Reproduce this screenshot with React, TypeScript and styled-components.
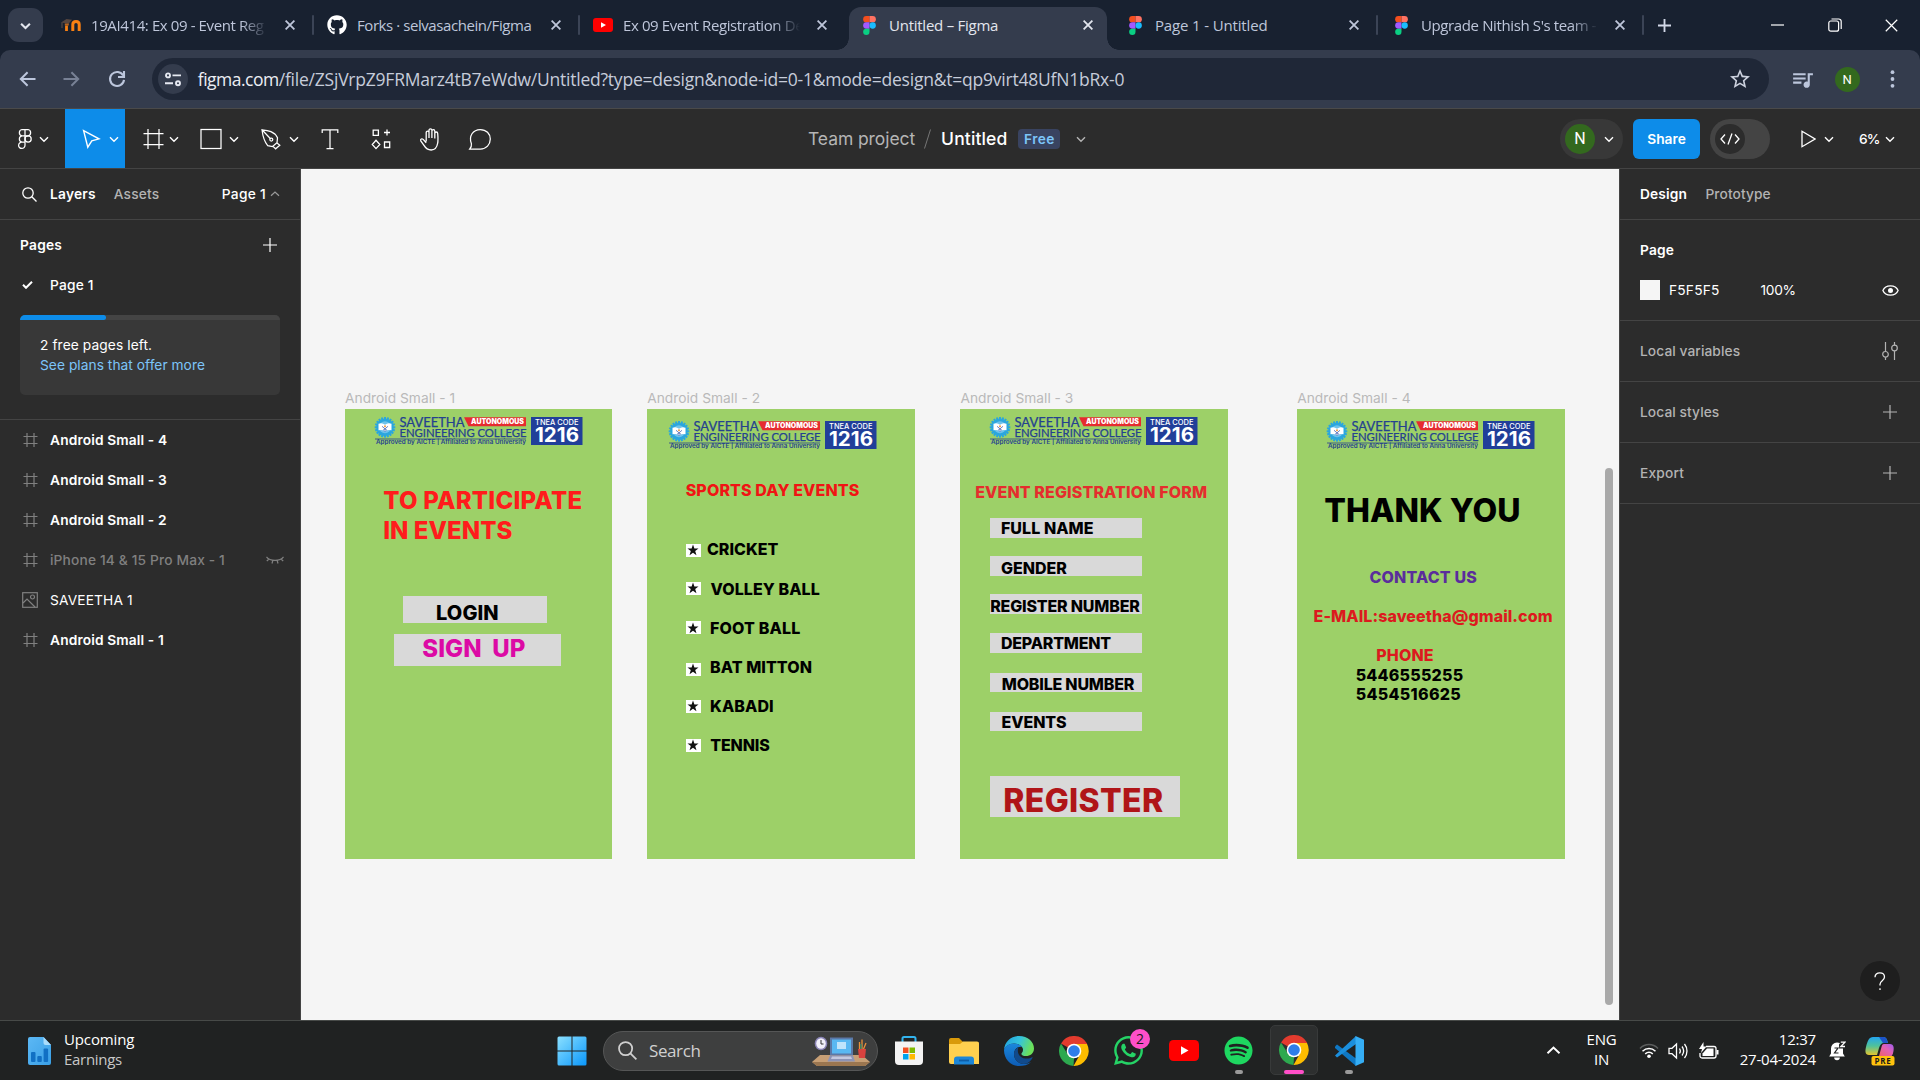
import React from "react";
import styled, { createGlobalStyle, css } from "styled-components";
import { FaGithub, FaSpotify, FaWhatsapp } from "react-icons/fa";
import { MdStarBorder, MdQueueMusic } from "react-icons/md";

const GlobalStyle = createGlobalStyle`
  * { box-sizing: border-box; }
  body { margin: 0; background: #2c2c2c; overflow: hidden; }
  svg { display: block; flex: none; }
`;

const ui = `"Open Sans", "Noto Sans", sans-serif`;
const inter = `Inter, "Liberation Sans", sans-serif`;

const Screen = styled.div`
  width: 1920px;
  height: 1080px;
  display: flex;
  flex-direction: column;
  overflow: hidden;
  font-family: ${inter};
  white-space: nowrap;
`;

/* ---------- browser chrome ---------- */

const TabStrip = styled.div`
  height: 50px;
  display: flex;
  background: #182130;
  padding-left: 8px;
  font-family: ${ui};
`;
const TabSearch = styled.div`
  width: 35px;
  height: 34px;
  margin: 8px 8px 0 0;
  border-radius: 11px;
  background: #343c4d;
  color: #e3e6ee;
  display: grid;
  place-items: center;
`;
const Tab = styled.div<{ $active?: boolean }>`
  position: relative;
  width: 258px;
  height: 43px;
  margin-top: 7px;
  padding: 0 9px 7px 10px;
  display: flex;
  align-items: center;
  border-radius: 12px 12px 0 0;
  background: ${(p) => (p.$active ? "#343c4d" : "transparent")};
  color: ${(p) => (p.$active ? "#e3e6ee" : "#bec6da")};
  ${(p) =>
    p.$active &&
    css`
      &::before,
      &::after {
        content: "";
        position: absolute;
        bottom: 0;
        width: 12px;
        height: 12px;
      }
      &::before {
        left: -12px;
        background: radial-gradient(circle at 0 0, transparent 11.5px, #343c4d 12px);
      }
      &::after {
        right: -12px;
        background: radial-gradient(circle at 100% 0, transparent 11.5px, #343c4d 12px);
      }
    `}
`;
const TabIcon = styled.div`
  width: 20px;
  height: 20px;
  margin-right: 10px;
  display: grid;
  place-items: center;
  color: #fff;
`;
const TabTitle = styled.div<{ $ls: number; $fade?: boolean }>`
  width: 178px;
  overflow: hidden;
  font-size: 15px;
  line-height: 22px;
  letter-spacing: ${(p) => p.$ls}px;
  ${(p) => p.$fade && "mask-image: linear-gradient(90deg, #000 150px, transparent 177px);"}
`;
const TabClose = styled.div`
  width: 21px;
  margin-left: auto;
  display: grid;
  place-items: center;
`;
const TabGap = styled.div<{ $line?: boolean }>`
  width: 8px;
  height: 20px;
  margin-top: 15px;
  display: flex;
  justify-content: center;
  &::before {
    content: "";
    width: 2px;
    border-radius: 1px;
    background: ${(p) => (p.$line ? "#3b4456" : "transparent")};
  }
`;
const NewTab = styled.div`
  width: 34px;
  height: 50px;
  display: grid;
  place-items: center;
  color: #d3d9e8;
`;
const WindowButtons = styled.div`
  margin-left: auto;
  display: flex;
  color: #fff;
  & > div {
    width: 57px;
    height: 50px;
    display: grid;
    place-items: center;
  }
`;
const NavBack = styled.div`
  background: #182130;
`;
const NavBar = styled.div`
  height: 58px;
  background: #343c4d;
  border-radius: 10px 10px 0 0;
  display: flex;
  align-items: center;
  padding: 0 6px;
  color: #bcc6dc;
`;
const NavSlot = styled.div<{ $w?: number; $dim?: boolean }>`
  width: ${(p) => p.$w ?? 44}px;
  display: grid;
  place-items: center;
  opacity: ${(p) => (p.$dim ? 0.5 : 1)};
`;
const Omnibox = styled.div`
  width: 1620px;
  height: 42px;
  margin: 0 11px 0 12px;
  border-radius: 21px;
  background: #1f2737;
  display: flex;
  align-items: center;
  padding: 0 17px 0 6px;
  font: 17.5px/28px ${ui};
  letter-spacing: -0.22px;
  color: #c6ccda;
`;
const Host = styled.span`
  color: #eceef4;
  letter-spacing: -0.5px;
`;
const SiteChip = styled.div`
  width: 30px;
  height: 30px;
  margin-right: 10px;
  border-radius: 50%;
  background: #343c4d;
  display: grid;
  place-items: center;
`;
const StarSlot = styled.div`
  margin-left: auto;
  color: #cdd2df;
`;
const Avatar = styled.div<{ $size: number }>`
  width: ${(p) => p.$size}px;
  height: ${(p) => p.$size}px;
  border-radius: 50%;
  background: #33691e;
  color: #fff;
  display: grid;
  place-items: center;
  font: ${(p) => (p.$size > 26 ? 16 : 13)}px/1 Roboto, sans-serif;
`;

/* ---------- figma toolbar ---------- */

const Toolbar = styled.div`
  height: 61px;
  display: flex;
  background: #2c2c2c;
  border-top: 1px solid #4a4a4a;
  border-bottom: 1px solid #444;
  color: #fff;
`;
const Tool = styled.div<{ $w?: number; $pad?: number; $gap?: number; $on?: boolean }>`
  width: ${(p) => p.$w ?? 60}px;
  height: 59px;
  padding-left: ${(p) => p.$pad ?? 16}px;
  display: flex;
  align-items: center;
  gap: ${(p) => p.$gap ?? 4}px;
  background: ${(p) => (p.$on ? "#0d8ce9" : "transparent")};
`;
const FileTitle = styled.div`
  display: flex;
  align-items: center;
  margin-left: 303px;
  font-size: 17.5px;
  color: #b5b5b5;
  letter-spacing: -0.08px;
`;
const Slash = styled.div`
  margin-left: 9px;
`;
const FileName = styled.span`
  margin-left: 10px;
  color: #fff;
  font-weight: 500;
  letter-spacing: 0.12px;
`;
const FreeBadge = styled.span`
  width: 42px;
  height: 20px;
  margin: 0 16px 0 11px;
  border-radius: 4px;
  background: #394360;
  color: #7cc4f8;
  font-size: 13.75px;
  font-weight: 600;
  line-height: 20px;
  letter-spacing: 0.4px;
  text-align: center;
`;
const Actions = styled.div`
  margin-left: auto;
  padding-right: 25px;
  display: flex;
  align-items: center;
`;
const UserPill = styled.div`
  width: 63px;
  height: 40px;
  padding-left: 5px;
  border-radius: 20px;
  background: #383838;
  display: flex;
  align-items: center;
  gap: 9px;
`;
const Share = styled.div`
  width: 67px;
  height: 40px;
  margin: 0 10px;
  border-radius: 6px;
  background: #0d8ce9;
  font-size: 13.75px;
  font-weight: 600;
  line-height: 40px;
  text-align: center;
`;
const DevToggle = styled.div`
  width: 60px;
  height: 40px;
  padding: 5px;
  margin-right: 31px;
  border-radius: 20px;
  background: #444;
`;
const DevKnob = styled.div`
  width: 30px;
  height: 30px;
  border-radius: 50%;
  background: #2c2c2c;
  display: grid;
  place-items: center;
`;
const PlayGroup = styled.div`
  display: flex;
  align-items: center;
  gap: 8px;
`;
const Zoom = styled.div`
  width: 19px;
  margin: 0 7px 0 25px;
  font-size: 13.75px;
  font-weight: 500;
  letter-spacing: -0.9px;
`;

/* ---------- workspace ---------- */

const Workspace = styled.div`
  height: 851px;
  display: flex;
`;
const LeftPanel = styled.div`
  width: 301px;
  border-right: 1px solid #444;
  background: #2c2c2c;
  color: #fff;
  font-size: 13.75px;
`;
const RightPanel = styled.div`
  position: relative;
  width: 301px;
  border-left: 1px solid #444;
  background: #2c2c2c;
  color: #fff;
  font-size: 13.75px;
`;
const PanelTabs = styled.div<{ $pad: number }>`
  height: 51px;
  padding: 0 20px 0 ${(p) => p.$pad}px;
  display: flex;
  align-items: center;
  border-bottom: 1px solid #444;
`;
const Label = styled.span<{ $w?: number; $ls?: number; $c?: string; $ml?: number }>`
  font-weight: ${(p) => p.$w ?? 600};
  letter-spacing: ${(p) => p.$ls ?? 0.15}px;
  color: ${(p) => p.$c ?? "#fff"};
  margin-left: ${(p) => p.$ml ?? 0}px;
`;
const Push = styled.div`
  margin-left: auto;
  display: flex;
  align-items: center;
`;
const PagesHead = styled.div`
  height: 50px;
  padding: 0 23px 0 20px;
  display: flex;
  align-items: center;
`;
const PageRow = styled.div`
  height: 30px;
  padding-left: 22px;
  display: flex;
  align-items: center;
`;
const PlanWrap = styled.div`
  padding: 15px 20px 24px;
  border-bottom: 1px solid #444;
`;
const PlanCard = styled.div`
  height: 80px;
  border-radius: 5px;
  overflow: hidden;
  background: #383838;
  line-height: 20px;
`;
const PlanMeter = styled.div`
  height: 5px;
  margin-bottom: 15px;
  background: #444;
  &::before {
    content: "";
    display: block;
    width: 86px;
    height: 5px;
    border-radius: 0 3px 3px 0;
    background: #0d8ce9;
  }
`;
const PlanText = styled.div<{ $link?: boolean }>`
  padding-left: 20px;
  letter-spacing: ${(p) => (p.$link ? 0.04 : 0.09)}px;
  color: ${(p) => (p.$link ? "#7cc4f8" : "#fff")};
`;
const LayerRow = styled.div<{ $dim?: boolean; $thin?: boolean }>`
  height: 40px;
  padding: 0 16px 0 22px;
  display: flex;
  align-items: center;
  font-weight: ${(p) => (p.$thin ? 400 : p.$dim ? 500 : 600)};
  letter-spacing: ${(p) => (p.$dim ? 0.15 : 0.13)}px;
  color: ${(p) => (p.$dim ? "#808080" : "#fff")};
  & > svg:first-child {
    margin-right: 12px;
  }
`;
const PageSection = styled.div`
  height: 101px;
  padding: 20px 20px 0;
  border-bottom: 1px solid #444;
`;
const PageTitle = styled.div`
  height: 20px;
  line-height: 21px;
  font-weight: 600;
  letter-spacing: 0.2px;
`;
const FillRow = styled.div`
  height: 40px;
  padding-right: 1px;
  margin-top: 10px;
  display: flex;
  align-items: center;
`;
const Swatch = styled.div`
  width: 20px;
  height: 20px;
  background: #f5f5f5;
`;
const Section = styled.div<{ $end?: number }>`
  height: 61px;
  padding: 0 ${(p) => p.$end ?? 23}px 0 20px;
  display: flex;
  align-items: center;
  border-bottom: 1px solid #444;
`;
const Help = styled.div`
  position: absolute;
  right: 20px;
  bottom: 19px;
  width: 40px;
  height: 40px;
  border-radius: 50%;
  background: #1e1e1e;
  display: grid;
  place-items: center;
`;

/* ---------- canvas ---------- */

const Canvas = styled.div`
  position: relative;
  width: 1318px;
  background: #f5f5f5;
`;
const Scrollbar = styled.div`
  position: absolute;
  left: 1304px;
  top: 299px;
  width: 8px;
  height: 537px;
  border-radius: 4px;
  background: #a9a9a9;
`;
const Artboard = styled.div<{ $x: number }>`
  position: absolute;
  left: ${(p) => p.$x}px;
  top: 239.5px;
  width: 267.4px;
  height: 450px;
  background: #9dd068;
  color: #000;
`;
const ArtboardName = styled.div`
  position: absolute;
  left: 0;
  top: -21px;
  font-size: 13.75px;
  line-height: 20px;
  letter-spacing: 0.02px;
  color: #b9b9b9;
`;
const Box = styled.div<{ $x: number; $y: number; $w: number; $h: number }>`
  position: absolute;
  left: ${(p) => p.$x}px;
  top: ${(p) => p.$y}px;
  width: ${(p) => p.$w}px;
  height: ${(p) => p.$h}px;
  background: #d9d9d9;
`;
/* $y is the text baseline */
const CanvasText = styled.div<{ $x: number; $y: number; $s?: number; $ls?: number; $c?: string }>`
  position: absolute;
  left: ${(p) => p.$x}px;
  top: ${(p) => p.$y + 0.5 - (p.$s ?? 16) * 0.964}px;
  font-size: ${(p) => p.$s ?? 16}px;
  line-height: 1.2;
  font-weight: 760;
  font-variation-settings: "opsz" 14;
  letter-spacing: ${(p) => p.$ls ?? 0.15}px;
  color: ${(p) => p.$c ?? "#000"};
  white-space: pre;
`;
const StarBox = styled.div<{ $y: number }>`
  position: absolute;
  left: 38.5px;
  top: ${(p) => p.$y}px;
  width: 15px;
  height: 12.5px;
  background: #fff;
  display: grid;
  place-items: center;
`;
const LogoSpot = styled.div<{ $x: number; $y: number }>`
  position: absolute;
  left: ${(p) => p.$x}px;
  top: ${(p) => p.$y}px;
  & > svg {
    overflow: visible;
  }
`;

/* ---------- taskbar ---------- */

const Taskbar = styled.div`
  height: 60px;
  border-top: 1px solid #474a48;
  background: #202222;
  display: flex;
  align-items: center;
  font: 15px/20px ${ui};
  color: #fff;
`;
const Widget = styled.div`
  width: 557px;
  padding-left: 28px;
  display: flex;
  align-items: center;
  gap: 13px;
`;
const WidgetText = styled.div`
  padding-bottom: 3px;
  letter-spacing: -0.12px;
  & > div:last-child {
    color: #c8c8c8;
    letter-spacing: -0.3px;
  }
`;
const SearchBox = styled.div`
  width: 275px;
  height: 40px;
  margin: 0 3px 0 16px;
  padding: 0 7px 0 14px;
  border: 1px solid #555656;
  border-radius: 20px;
  background: #3e3f3f;
  display: flex;
  align-items: center;
  font-size: 17px;
  letter-spacing: -0.4px;
  color: #d0d0d0;
`;
const SearchWord = styled.span`
  margin: 0 auto 0 12px;
`;
const App55 = styled.div<{ $mark?: "idle" | "active" }>`
  position: relative;
  width: 55px;
  height: 59px;
  display: grid;
  place-items: center;
  ${(p) =>
    p.$mark &&
    css`
      &::after {
        content: "";
        position: absolute;
        left: ${p.$mark === "active" ? 17.5 : 23.5}px;
        top: 49px;
        width: ${p.$mark === "active" ? 20 : 8}px;
        height: 4px;
        border-radius: 2px;
        background: ${p.$mark === "active" ? "#ff4fc8" : "#9a9a9a"};
      }
    `}
`;
const ActiveTile = styled.div`
  width: 48px;
  height: 50px;
  margin-bottom: 1px;
  border: 1px solid #383a3a;
  border-radius: 5px;
  background: #2d2f2f;
  display: grid;
  place-items: center;
`;
const CountBadge = styled.div`
  position: absolute;
  left: 29px;
  top: 8px;
  width: 20px;
  height: 20px;
  border-radius: 50%;
  background: #ff4fc8;
  color: #1a1a1a;
  font-size: 14px;
  line-height: 20px;
  text-align: center;
`;
const Tray = styled.div`
  margin-left: auto;
  padding-right: 17px;
  display: flex;
  align-items: center;
`;
const TrayText = styled.div<{ $w: number; $align: string; $ls: number }>`
  width: ${(p) => p.$w}px;
  padding-bottom: 3px;
  text-align: ${(p) => p.$align};
  letter-spacing: ${(p) => p.$ls}px;
`;
const TrayIcon = styled.div<{ $w: number }>`
  width: ${(p) => p.$w}px;
  display: grid;
  place-items: center;
`;

/* ---------- drawings ---------- */

const Chevron = ({ w = 10, sw = 1.4, up = false, c = "currentColor" }) => (
  <svg width={w} height={w} viewBox="0 0 10 10" fill="none" stroke={c} strokeWidth={sw}>
    <path d={up ? "M1 6.8 5 3l4 3.8" : "M1 3.3 5 7.2 9 3.3"} />
  </svg>
);
const Cross = ({ s = 10, sw = 1.8 }) => (
  <svg width={s} height={s} viewBox="0 0 10 10" stroke="currentColor" strokeWidth={(sw * 10) / s}>
    <path d="M.6.6l8.8 8.8M9.4.6.6 9.4" />
  </svg>
);
const Plus = ({ s = 14, sw = 1.2, c = "currentColor" }) => (
  <svg width={s} height={s} viewBox="0 0 14 14" stroke={c} strokeWidth={sw}>
    <path d="M7 0v14M0 7h14" />
  </svg>
);
const FigmaLogo = () => (
  <svg width="13" height="19" viewBox="0 0 12 18">
    <path d="M3 0h3v6H3a3 3 0 0 1 0-6z" fill="#f24e1e" />
    <path d="M6 0h3a3 3 0 0 1 0 6H6z" fill="#ff7262" />
    <path d="M3 6h3v6H3a3 3 0 0 1 0-6z" fill="#a259ff" />
    <circle cx="9" cy="9" r="3" fill="#1abcfe" />
    <path d="M3 12h3v3a3 3 0 1 1-3-3z" fill="#0acf83" />
  </svg>
);
const Moodle = () => (
  <svg width="20" height="14" viewBox="0 0 20 14" fill="none">
    <path d="M5.500 13V7.500" stroke="#f98012" strokeWidth="2.800" />
    <path d="M11.800 13V6.500c0-4 6.400-4 6.400 0V13" stroke="#f98012" strokeWidth="3" />
    <path d="M0 4.500 5.500 1l5.500.8-3.500 4z" fill="#57463f" />
    <path d="M3.800 5.500h4v2h-4z" fill="#b8651f" />
    <path d="M1 4.500V10" stroke="#5f5049" strokeWidth="1" />
  </svg>
);
const YouTube = ({ w = 20, h = 14 }) => (
  <svg width={w} height={h} viewBox="0 0 20 14" preserveAspectRatio="none">
    <rect width="20" height="14" rx="3" fill="#f00" />
    <path d="M8 4.2v5.6L13 7z" fill="#fff" />
  </svg>
);
const Reload = () => (
  <svg width="18" height="18" viewBox="0 0 18 18" fill="none" stroke="currentColor" strokeWidth="2.1">
    <path d="M15.2 5.6A7 7 0 1 0 16 9.8" />
    <path d="M16 1v6h-6" />
  </svg>
);
const Arrow = ({ flip = false }) => (
  <svg width="17" height="16" viewBox="0 0 17 16" fill="none" stroke="currentColor" strokeWidth="2" transform={flip ? "scale(-1 1)" : undefined}>
    <path d="M16.5 8H2M8.600 1.200 1.800 8l6.800 6.800" />
  </svg>
);
const SiteSettings = () => (
  <svg width="16" height="15" viewBox="0 0 16 15" fill="none" stroke="#e6e9f2" strokeWidth="1.900">
    <circle cx="3" cy="3.400" r="2" />
    <path d="M7.500 3.400H16M0 11.300h8" />
    <circle cx="13" cy="11.300" r="2" />
  </svg>
);
const toolSvg = { width: 24, height: 24, viewBox: "0 0 24 24", fill: "none", stroke: "#fff", strokeWidth: 1.25 };
const FigmaMenu = () => (
  <svg {...toolSvg}>
    <path d="M12 2.5H9a3.2 3.2 0 0 0 0 6.3h3zM12 2.5h3a3.2 3.2 0 0 1 0 6.3h-3zM12 8.8H9a3.2 3.2 0 0 0 0 6.3h3zM12 15.1H9a3.2 3.2 0 1 0 3 3.2z" />
    <circle cx="15.1" cy="12" r="3.1" />
  </svg>
);
const MoveIcon = () => (
  <svg {...toolSvg} strokeWidth={1.4}><path d="M4.600 3.600 20 11.800l-7.200 2-4 6.400z" /></svg>
);
const FrameIcon = () => (
  <svg {...toolSvg}><path d="M7 2v20M18 2v20M2.500 6.500h20M2.500 17.500h20" /></svg>
);
const RectIcon = () => (
  <svg {...toolSvg}><rect x="2" y="2.500" width="20" height="19" /></svg>
);
const PenIcon = () => (
  <svg {...toolSvg}>
    <path d="M3 2.8c6 .6 12.600 1.600 15.500 8l-.5 5-4.500 3.700-4.800-.9C5.200 14.500 3.600 8 3 2.800zM3 2.800l8.500 9" />
    <circle cx="12.300" cy="12.600" r="1.500" />
    <path d="m18 16 2.800 2.200-4.200 3.600-2.600-2.400" />
  </svg>
);
const TypeIcon = () => (
  <svg {...toolSvg}><path d="M4.200 6V2.800h15.600V6M12 2.800v18.700M8.500 21.500h7" /></svg>
);
const ComponentsIcon = () => (
  <svg {...toolSvg} strokeWidth={1.3}>
    <path d="M4.200 3.200h5.200v5.200H4.200zM15.500 15h5.200v5.500h-5.200zM18 2.500v6M15 5.500h6M7 13.300l3.800 4.200L7 21.600l-3.700-4.100z" />
  </svg>
);
const HandIcon = () => (
  <svg {...toolSvg} strokeWidth={1.3}>
    <path d="M7.200 14.500V5.600c0-2 2.800-2 2.800 0M10 11V3.300c0-2 2.900-2 2.900 0V11M12.900 4.200c0-2 2.900-2 2.900 0V11.500M15.800 6.500c0-2 2.900-2 2.900 0 .4 5 .4 7.500 0 9.500-.6 3.600-2.500 7-6.500 7-3.700 0-5.700-2-7.200-4.600L1.800 14c-.8-2 1.200-2.800 2.400-1.600l3 3.300" />
  </svg>
);
const CommentIcon = () => (
  <svg {...toolSvg}><path d="M1.800 22c1.700-2 1.900-3.300 1.600-5.200C.4 9 5 2.500 12.300 2.500c6 0 10 4.300 10 9.600 0 5.400-4 9.900-10 9.900z" /></svg>
);
const CodeIcon = () => (
  <svg width="20" height="12" viewBox="0 0 20 12" fill="none" stroke="#fff" strokeWidth="1.300">
    <path d="M5 1.500 1 6l4 4.500M15 1.500 19 6l-4 4.500M12 .5 8 11.500" />
  </svg>
);
const PlayIcon = () => (
  <svg width="15" height="18" viewBox="0 0 15 18" fill="none" stroke="#fff" strokeWidth="1.300">
    <path d="M1 1.300 14 9 1 16.700z" />
  </svg>
);
const SearchGlyph = ({ s = 15, sw = 1.3 }) => (
  <svg width={s} height={s} viewBox="0 0 15 15" fill="none" stroke="currentColor" strokeWidth={sw}>
    <circle cx="6" cy="6" r="5.200" />
    <path d="m9.800 9.800 4.700 4.700" />
  </svg>
);
const Hash = () => (
  <svg width="16" height="16" viewBox="0 0 16 16" stroke="#808080" strokeWidth="1.200">
    <path d="M5 1v14M12 1v14M1.500 4.500h14M1.500 11.500h14" />
  </svg>
);
const ImageGlyph = () => (
  <svg width="16" height="16" viewBox="0 0 16 16" fill="none" stroke="#808080" strokeWidth="1.200">
    <rect x=".7" y=".7" width="14.600" height="14.600" />
    <circle cx="10.500" cy="5" r="2" />
    <path d="m1 11 4-4 8 8" />
  </svg>
);
const ClosedEye = () => (
  <svg width="18" height="8" viewBox="0 0 18 8" fill="none" stroke="#808080" strokeWidth="1.200">
    <path d="M.5.8C4 5.500 14 5.500 17.500.8M3 3 .8 5M6.800 4.500 6 7.500M11.200 4.500l.8 3M15 3l2.200 2" />
  </svg>
);
const Check = () => (
  <svg width="11" height="8" viewBox="0 0 11 8" fill="none" stroke="#fff" strokeWidth="2">
    <path d="m1 3.800 3 3L10 .8" />
  </svg>
);
const Eye = () => (
  <svg width="17" height="11" viewBox="0 0 17 11" fill="none" stroke="#fff" strokeWidth="1.300">
    <path d="M.9 5.500C3.500-.7 13.500-.7 16.100 5.500 13.500 11.700 3.500 11.700.9 5.500z" />
    <circle cx="8.500" cy="5.500" r="2.500" fill="#fff" stroke="none" />
  </svg>
);
const Sliders = () => (
  <svg width="16" height="18" viewBox="0 0 16 18" fill="none" stroke="#b3b3b3" strokeWidth="1.200">
    <path d="M3.500 0v9.500M3.500 15.200V18M12.500 0v3.200M12.500 9v9" />
    <circle cx="3.500" cy="12.300" r="2.800" />
    <circle cx="12.500" cy="6" r="2.800" />
  </svg>
);
const QuestionMark = () => (
  <svg width="12" height="19" viewBox="0 0 12 19" fill="none" stroke="#fff" strokeWidth="1.300">
    <path d="M1 5.200C1 2.500 3 .9 5.800.9s4.700 1.600 4.700 4.100c0 3.600-4.500 3.800-4.500 7.300v1.200M6 16.300v1.600" />
  </svg>
);
const Star = () => (
  <svg width="12" height="12" viewBox="0 0 24 24" fill="#111">
    <path d="m12 1 2.800 8H23l-6.600 5 2.500 8.300L12 17.300 5.100 22.300 7.600 14 1 9h8.200z" />
  </svg>
);

const teeth = Array.from({ length: 20 }, (_, i) => i * 18);
const CollegeLogo = () => (
  <svg width="208" height="29" viewBox="0 0 208 29">
    <g transform="translate(10 10.300)">
      {teeth.map((a) => (
        <rect key={a} x="-1" y="-10.300" width="2" height="3" fill="#2ba6de" transform={`rotate(${a})`} />
      ))}
      <circle r="8.800" fill="#2ba6de" />
      <circle r="6" fill="#6fc2ea" />
      <path d="M-6.500-3.500Q-3-5 0-2.500 3-5 6.500-3.500V3Q3 2 0 4-3 2-6.500 3z" fill="#fff" />
      <path d="M-3-1 0 1.500 3-1M0 1.500V4.500M-2 3 0 1.500 2 3" stroke="#4a63b5" strokeWidth=".8" fill="none" />
      <circle cy="-1" r="1" fill="#f29a3b" />
    </g>
    <g fill="#24418f" stroke="#24418f" strokeWidth=".25" fontFamily="Lato, sans-serif">
      <text x="24.500" y="9.900" fontSize="13" textLength="65" lengthAdjust="spacingAndGlyphs">SAVEETHA</text>
      <text x="24.500" y="20" fontSize="11.200" textLength="127" lengthAdjust="spacingAndGlyphs">ENGINEERING COLLEGE</text>
    </g>
    <text x="1" y="27.400" fontSize="5.600" fill="#24418f" fontFamily="Inter, sans-serif" fontWeight="600" textLength="150" lengthAdjust="spacingAndGlyphs">Approved by AICTE | Affiliated to Anna University</text>
    <path d="M0 22h151" stroke="#24418f" strokeWidth=".8" />
    <path d="M89 .3h62v9H93.500z" fill="#e62b2f" />
    <text x="96" y="7.300" fontSize="7" fontWeight="900" fill="#fff" fontFamily="Inter, sans-serif" textLength="53" lengthAdjust="spacingAndGlyphs">AUTONOMOUS</text>
    <rect x="156" y="0" width="51.500" height="28" fill="#213f99" />
    <g fill="#fff" fontFamily="Inter, sans-serif">
      <text x="160" y="8" fontSize="7.500" fontWeight="500" textLength="43.500" lengthAdjust="spacingAndGlyphs">TNEA CODE</text>
      <text x="160" y="25" fontSize="19.500" fontWeight="700" textLength="44" lengthAdjust="spacingAndGlyphs">1216</text>
    </g>
  </svg>
);

const EarningsIcon = () => (
  <svg width="23" height="28" viewBox="0 0 23 28">
    <defs>
      <linearGradient id="doc" x1="0" y1="0" x2="1" y2="1"><stop stopColor="#5cb8f5" /><stop offset="1" stopColor="#3aa0e6" /></linearGradient>
    </defs>
    <path d="M2 0h13.500L23 8v18a2 2 0 0 1-2 2H2a2 2 0 0 1-2-2V2a2 2 0 0 1 2-2z" fill="url(#doc)" />
    <path d="M15.500 0 23 8h-5.500a2 2 0 0 1-2-2z" fill="#a9dcfb" />
    <rect x="3" y="15" width="4.500" height="10" rx="1" fill="#1170c4" />
    <rect x="9.300" y="19" width="4.500" height="6" rx="1" fill="#1170c4" />
    <rect x="15.600" y="11.500" width="4.500" height="13.500" rx="1" fill="#1170c4" />
  </svg>
);
const StartIcon = () => (
  <svg width="30" height="30" viewBox="0 0 30 30">
    <defs>
      <linearGradient id="win" x1="0" y1="0" x2="1" y2="1" gradientUnits="objectBoundingBox"><stop stopColor="#8be0ff" /><stop offset="1" stopColor="#0a97fb" /></linearGradient>
    </defs>
    <path d="M2 .5h12.500V14.500H.5V2A1.500 1.500 0 0 1 2 .5zM15.500.5H28A1.500 1.500 0 0 1 29.500 2v12.500h-14zM.5 15.500h14v14H2A1.500 1.500 0 0 1 .5 28zM15.500 15.500h14V28a1.500 1.500 0 0 1-1.500 1.500H15.500z" fill="url(#win)" />
  </svg>
);
const DeskArt = () => (
  <svg width="58" height="30" viewBox="0 0 58 30">
    <path d="M8 19h42l8 7-5 4H5l-5-4z" fill="#c79f75" />
    <path d="M0 26h58l-5 4H5z" fill="#9b7650" />
    <path d="M18 1.500h23v18H18z" fill="#5b79a8" />
    <path d="M20 3.500h19v14H20z" fill="#59b8f2" />
    <path d="M25 6h9v7h-9z" fill="#bfe4fb" />
    <path d="M18 19.500h23l2 6H15.500z" fill="#8d93b5" />
    <path d="M20 20.500h19l1 2.500H19z" fill="#c4c8de" />
    <ellipse cx="9" cy="7.500" rx="6.300" ry="6.800" fill="#8a84b5" />
    <ellipse cx="9" cy="7.500" rx="4.800" ry="5.200" fill="#f2f0fa" />
    <path d="M9 4v4h2.500" stroke="#333" fill="none" />
    <path d="M46 13h8l-1 9h-6z" fill="#d9423e" />
    <path d="M47.500 13V6M50 13V3.500M51.500 13l2.500-6" stroke="#e8913a" strokeWidth="1.300" />
    <path d="M49 13V8" stroke="#3b8f6b" strokeWidth="1.300" />
  </svg>
);
const StoreIcon = () => (
  <svg width="30" height="30" viewBox="0 0 30 30">
    <path d="M8.500 7V2.500A1.500 1.500 0 0 1 10 1h10a1.500 1.500 0 0 1 1.500 1.500V7" fill="none" stroke="#32b4ef" strokeWidth="2" />
    <path d="M1 5.500h28V25a4 4 0 0 1-4 4H5a4 4 0 0 1-4-4z" fill="#f3f3f3" />
    <path d="M9 11.500h5.500V17H9z" fill="#f25022" /><path d="M15.500 11.500H21V17h-5.500z" fill="#7fba00" />
    <path d="M9 18h5.500v5.500H9z" fill="#00a4ef" /><path d="M15.500 18H21v5.500h-5.500z" fill="#ffb900" />
  </svg>
);
const FolderIcon = () => (
  <svg width="30" height="28" viewBox="0 0 30 28">
    <path d="M0 3a2 2 0 0 1 2-2h8l4 4h14a2 2 0 0 1 2 2v6H0z" fill="#d99a0a" />
    <path d="M0 7h11l3-2.500h14a2 2 0 0 1 2 2V27H2a2 2 0 0 1-2-2z" fill="#ffd04f" />
    <path d="M5 27.500v-5a3 3 0 0 1 3-3h14a3 3 0 0 1 3 3v5z" fill="#1c86d8" />
    <path d="M10 23.500h10" stroke="#0e5ea8" strokeWidth="1.800" />
  </svg>
);
const EdgeIcon = () => (
  <svg width="30" height="30" viewBox="0 0 30 30">
    <defs>
      <linearGradient id="e1" x1="0" y1="0" x2="1" y2=".3"><stop stopColor="#1f9fe0" /><stop offset=".55" stopColor="#35c4dc" /><stop offset="1" stopColor="#6be05a" /></linearGradient>
      <linearGradient id="e2" x1="0" y1="0" x2="0" y2="1"><stop stopColor="#1b87dc" /><stop offset="1" stopColor="#0d5cb5" /></linearGradient>
    </defs>
    <path d="M0 14C.5 6 7 0 15 0c9 0 15 6 15 12.500 0 5-4 7.500-8 7.500-3 0-5-1-4.500-2.500 1-1.500 1.500-2 1.500-4C19 10.500 15 7.500 10 7.500S1 10.500 0 14z" fill="url(#e1)" />
    <path d="M0 14c1-4 5-6.500 10-6.500 4 0 7 1.500 8.300 3.500C14 10 10 13 10 18c0 6 5 10 10 10 3 0 5-.7 7-2-3 3-7.500 4-12 4C6.500 30 0 23 0 14z" fill="url(#e2)" />
    <path d="M10 18c0-3.500 2-6 4.500-6.500-1.500 2.500-1 10 7 11 3 .3 5-.5 6.500-1.300.5-.2.800.2.500.600C27 25 24 28 20 28c-5 0-10-4-10-10z" fill="#114a8b" />
  </svg>
);
const ChromeIcon = () => (
  <svg width="30" height="30" viewBox="0 0 30 30">
    <path d="M15 15 2 7.500A15 15 0 0 1 28 7.500L28 8H15z" fill="#e33b2e" />
    <path d="M2 7.500 8.900 18.500 15 22l-.5 8A15 15 0 0 1 2 7.500z" fill="#2da94f" />
    <path d="M15 8h13a15 15 0 0 1-13.500 22l6.500-11.500z" fill="#fdbd00" />
    <circle cx="15" cy="15" r="7.300" fill="#fff" />
    <circle cx="15" cy="15" r="5.800" fill="#2f7de9" />
  </svg>
);
const CodeEditorIcon = () => (
  <svg width="30" height="30" viewBox="0 0 30 30">
    <path d="M1 10.500 3 8.500 22 22.500V30L1 12z" fill="#0f78c4" />
    <path d="M1 19.500 3 21.500 22 8V0z" fill="#1b8fdd" />
    <path d="M21.500 0 30 3.800v22.400L21.500 30z" fill="#35aef5" />
  </svg>
);
const Wifi = () => (
  <svg width="20" height="16" viewBox="0 0 20 16" fill="none" stroke="#fff" strokeWidth="1.500">
    <path d="M1 5.500C6 .3 14 .3 19 5.500" stroke="#5b5d5d" />
    <path d="M3.500 8.300c3.800-3.600 9.200-3.600 13 0M6.200 10.900c2.300-2 5.300-2 7.600 0" />
    <circle cx="10" cy="13.300" r="1.800" fill="#fff" stroke="none" />
  </svg>
);
const Speaker = () => (
  <svg width="21" height="18" viewBox="0 0 21 18" fill="none" stroke="#fff" strokeWidth="1.300">
    <path d="M1 6.300h3L8.500 2v14L4 11.700H1z" />
    <path d="M11.500 6.500c1 1.500 1 3.500 0 5M14 4.500c2 2.700 2 6.300 0 9M16.500 2c3.300 4 3.300 10 0 14" />
  </svg>
);
const Battery = () => (
  <svg width="20" height="18" viewBox="0 0 20 18" fill="none" stroke="#fff" strokeWidth="1.300">
    <path d="M7 4.500h8a2 2 0 0 1 2 2V14a2 2 0 0 1-2 2H3a2 2 0 0 1-2-2v-3" />
    <path d="M8 6.500h6.500v7.500H3.500v-2.500z" fill="#fff" stroke="none" />
    <path d="M18.500 8v4.500" strokeWidth="2" />
    <path d="M4.500 0 0 7h3l-1 4 5.500-6.500H4.500z" fill="#fff" stroke="none" />
  </svg>
);
const BellSnooze = () => (
  <svg width="18" height="20" viewBox="0 0 18 20">
    <path d="M9 1.500a6 6 0 0 0-6 6v5L1.200 15.500h15.600L15 12.500V7.500h-4V3.500l1-1.500z" fill="#fff" />
    <path d="M6.200 16.500a2.800 2.800 0 0 0 5.600 0z" fill="#fff" />
    <path d="M6.500 7H10l-3.500 5H10.500" stroke="#202222" strokeWidth="1.200" fill="none" />
    <path d="M12.800 1.200H17L12.800 5.500H17" stroke="#fff" strokeWidth="1.300" fill="none" />
  </svg>
);
const Copilot = () => (
  <svg width="30" height="30" viewBox="0 0 30 30">
    <defs>
      <linearGradient id="c1" x1="0" y1="0" x2="0" y2="1"><stop stopColor="#23a6f0" /><stop offset=".5" stopColor="#4fc29a" /><stop offset="1" stopColor="#e5c52e" /></linearGradient>
      <linearGradient id="c2" x1="0" y1="1" x2="1" y2="0"><stop stopColor="#f0605a" /><stop offset=".6" stopColor="#e261b5" /><stop offset="1" stopColor="#9a5cf0" /></linearGradient>
    </defs>
    <path d="M8 1h10c3 0 4 2 5 6h-4c-3 0-4 2-5 5l-2 7H4c-4 0-4-4-3-8 1.500-6 3-10 7-10z" fill="url(#c1)" />
    <path d="M14 1h5c2 0 3 2 4 6h-5z" fill="#1c54c9" />
    <path d="M19 8h6c4 0 4 4 3.500 7-.7 4-2 6-4 6H12l2-1 2.500-9c.5-2 1-3 2.500-3z" fill="url(#c2)" />
    <rect x="6.500" y="20" width="23" height="9.500" rx="2" fill="#ffc20e" />
    <text x="18" y="27.600" fontSize="8" fontWeight="700" fill="#1b1b1b" textAnchor="middle" fontFamily="Open Sans, sans-serif" letterSpacing=".8">PRE</text>
  </svg>
);

/* ---------- data ---------- */

const tabs = [
  { title: "19AI414: Ex 09 - Event Reg", ls: -0.39, fade: true, line: true, icon: <Moodle /> },
  { title: "Forks · selvasachein/Figma", ls: -0.43, fade: false, line: true, icon: <FaGithub size={20} /> },
  { title: "Ex 09 Event Registration De", ls: -0.4, fade: true, line: false, icon: <YouTube /> },
  { title: "Untitled – Figma", ls: -0.25, active: true, line: false, icon: <FigmaLogo /> },
  { title: "Page 1 - Untitled", ls: -0.15, line: true, icon: <FigmaLogo /> },
  { title: "Upgrade Nithish S's team -", ls: -0.38, fade: true, line: true, icon: <FigmaLogo /> },
];
const layers = [
  { name: "Android Small - 4" },
  { name: "Android Small - 3" },
  { name: "Android Small - 2" },
  { name: "iPhone 14 & 15 Pro Max - 1", dim: true },
  { name: "SAVEETHA 1", image: true },
  { name: "Android Small - 1" },
];
const sports = [
  { t: "CRICKET", x: 59.7, y: 146.8, star: 135.5, ls: 0.02 },
  { t: "VOLLEY BALL", x: 63.3, y: 186.3, star: 173.5, ls: 0.09 },
  { t: "FOOT BALL", x: 62.8, y: 225.3, star: 212.8, ls: 0.18 },
  { t: "BAT MITTON", x: 62.8, y: 264.3, star: 254.5, ls: 0.08 },
  { t: "KABADI", x: 62.8, y: 303.6, star: 291.5, ls: 0.1 },
  { t: "TENNIS", x: 63, y: 342.6, star: 330.5, ls: -0.12 },
];
const fields = [
  { t: "FULL NAME", x: 40.5, y: 125.2, box: 109.8, ls: 0.08 },
  { t: "GENDER", x: 40.7, y: 165.3, box: 147.8, ls: -0.02 },
  { t: "REGISTER NUMBER", x: 29.8, y: 203.3, box: 185.8, ls: -0.18 },
  { t: "DEPARTMENT", x: 40.5, y: 240.3, box: 224.8, ls: -0.2 },
  { t: "MOBILE NUMBER", x: 41.4, y: 281.3, box: 264.5, ls: -0.2 },
  { t: "EVENTS", x: 41.2, y: 319.3, box: 303.5, ls: -0.08 },
];

export default function App() {
  return (
    <Screen>
      <GlobalStyle />
      <TabStrip>
        <TabSearch><Chevron w={11} sw={1.9} /></TabSearch>
        {tabs.map((t) => (
          <React.Fragment key={t.title}>
            <Tab $active={t.active}>
              <TabIcon>{t.icon}</TabIcon>
              <TabTitle $ls={t.ls} $fade={t.fade}>{t.title}</TabTitle>
              <TabClose><Cross /></TabClose>
            </Tab>
            <TabGap $line={t.line} />
          </React.Fragment>
        ))}
        <NewTab><Plus s={13} sw={2} /></NewTab>
        <WindowButtons>
          <div><svg width="13" height="2"><path d="M0 1h13" stroke="#fff" strokeWidth="1.200" /></svg></div>
          <div>
            <svg width="14" height="14" viewBox="0 0 14 14" fill="none" stroke="#fff" strokeWidth="1.200">
              <rect x=".8" y="3" width="9.800" height="10.200" rx="2" />
              <path d="M3.500 1h7.300A2.400 2.400 0 0 1 13.200 3.500V11" />
            </svg>
          </div>
          <div><Cross s={13} sw={1.2} /></div>
        </WindowButtons>
      </TabStrip>
      <NavBack>
        <NavBar>
          <NavSlot><Arrow /></NavSlot>
          <NavSlot $dim><Arrow flip /></NavSlot>
          <NavSlot $w={46}><Reload /></NavSlot>
          <Omnibox>
            <SiteChip><SiteSettings /></SiteChip>
            <Host>figma.com</Host>
            /file/ZSjVrpZ9FRMarz4tB7eWdw/Untitled?type=design&amp;node-id=0-1&amp;mode=design&amp;t=qp9virt48UfN1bRx-0
            <StarSlot><MdStarBorder size={24} /></StarSlot>
          </Omnibox>
          <NavSlot $w={44}><MdQueueMusic size={25} /></NavSlot>
          <NavSlot $w={46}><Avatar $size={25}>N</Avatar></NavSlot>
          <NavSlot>
            <svg width="5" height="18" fill="currentColor"><circle cx="2.500" cy="2.200" r="1.900" /><circle cx="2.500" cy="9" r="1.900" /><circle cx="2.500" cy="15.800" r="1.900" /></svg>
          </NavSlot>
        </NavBar>
      </NavBack>

      <Toolbar>
        <Tool $w={65} $pad={13} $gap={2}><FigmaMenu /><Chevron /></Tool>
        <Tool $on $pad={14} $gap={6}><MoveIcon /><Chevron /></Tool>
        <Tool><FrameIcon /><Chevron /></Tool>
        <Tool $pad={14} $gap={6}><RectIcon /><Chevron /></Tool>
        <Tool $pad={14} $gap={6}><PenIcon /><Chevron /></Tool>
        <Tool $w={50} $pad={13}><TypeIcon /></Tool>
        <Tool $w={50} $pad={14}><ComponentsIcon /></Tool>
        <Tool $w={50} $pad={14}><HandIcon /></Tool>
        <Tool $w={50} $pad={13}><CommentIcon /></Tool>
        <FileTitle>
          Team project
          <Slash><svg width="7" height="20" viewBox="0 0 7 20"><path d="M6.500.5.5 19.500" stroke="#777" /></svg></Slash>
          <FileName>Untitled</FileName>
          <FreeBadge>Free</FreeBadge>
          <Chevron />
        </FileTitle>
        <Actions>
          <UserPill><Avatar $size={30}>N</Avatar><Chevron /></UserPill>
          <Share>Share</Share>
          <DevToggle><DevKnob><CodeIcon /></DevKnob></DevToggle>
          <PlayGroup><PlayIcon /><Chevron /></PlayGroup>
          <Zoom>6%</Zoom>
          <Chevron />
        </Actions>
      </Toolbar>

      <Workspace>
        <LeftPanel>
          <PanelTabs $pad={22}>
            <SearchGlyph />
            <Label $ml={13} $ls={0.22}>Layers</Label>
            <Label $ml={18} $w={500} $c="#b3b3b3">Assets</Label>
            <Push><Label $w={500} $ls={0.3}>Page 1</Label>&nbsp;<Chevron w={10} sw={1.2} up c="#9a9a9a" /></Push>
          </PanelTabs>
          <PagesHead><Label $ls={0.25}>Pages</Label><Push><Plus /></Push></PagesHead>
          <PageRow><Check /><Label $ml={17} $w={500} $ls={0.2}>Page 1</Label></PageRow>
          <PlanWrap>
            <PlanCard>
              <PlanMeter />
              <PlanText>2 free pages left.</PlanText>
              <PlanText $link>See plans that offer more</PlanText>
            </PlanCard>
          </PlanWrap>
          {layers.map((l) => (
            <LayerRow key={l.name} $dim={l.dim} $thin={l.image}>
              {l.image ? <ImageGlyph /> : <Hash />}
              {l.name}
              {l.dim && <Push><ClosedEye /></Push>}
            </LayerRow>
          ))}
        </LeftPanel>

        <Canvas>
          <Artboard $x={44}>
            <ArtboardName>Android Small - 1</ArtboardName>
            <LogoSpot $x={30} $y={8.5}><CollegeLogo /></LogoSpot>
            <CanvasText $x={38.2} $y={101.3} $s={24} $ls={0.24} $c="#ff1c1c">TO PARTICIPATE</CanvasText>
            <CanvasText $x={38.2} $y={130.8} $s={24} $ls={0.05} $c="#ff1c1c">IN EVENTS</CanvasText>
            <Box $x={57.5} $y={187} $w={144.5} $h={27.4} />
            <CanvasText $x={91} $y={210.8} $s={20} $ls={0.1}>LOGIN</CanvasText>
            <Box $x={49} $y={225} $w={166.5} $h={32.5} />
            <CanvasText $x={77.3} $y={249.2} $s={24} $ls={0.05} $c="#dc0aa5">{"SIGN  UP"}</CanvasText>
          </Artboard>
          <Artboard $x={346.2}>
            <ArtboardName>Android Small - 2</ArtboardName>
            <LogoSpot $x={22.2} $y={12}><CollegeLogo /></LogoSpot>
            <CanvasText $x={38.5} $y={87.3} $ls={0.12} $c="#f01414">SPORTS DAY EVENTS</CanvasText>
            {sports.map((s) => (
              <React.Fragment key={s.t}>
                <StarBox $y={s.star}><Star /></StarBox>
                <CanvasText $x={s.x} $y={s.y} $ls={s.ls}>{s.t}</CanvasText>
              </React.Fragment>
            ))}
          </Artboard>
          <Artboard $x={659.4}>
            <ArtboardName>Android Small - 3</ArtboardName>
            <LogoSpot $x={30} $y={8.5}><CollegeLogo /></LogoSpot>
            <CanvasText $x={14.8} $y={89.3} $ls={0.12} $c="#e52d2d">EVENT REGISTRATION FORM</CanvasText>
            {fields.map((f) => (
              <React.Fragment key={f.t}>
                <Box $x={30} $y={f.box} $w={152} $h={19.3} />
                <CanvasText $x={f.x} $y={f.y} $ls={f.ls}>{f.t}</CanvasText>
              </React.Fragment>
            ))}
            <Box $x={30} $y={367.8} $w={189.7} $h={40.5} />
            <CanvasText $x={42.9} $y={403.6} $s={32} $ls={0.35} $c="#b01518">REGISTER</CanvasText>
          </Artboard>
          <Artboard $x={996.2}>
            <ArtboardName>Android Small - 4</ArtboardName>
            <LogoSpot $x={30} $y={12.5}><CollegeLogo /></LogoSpot>
            <CanvasText $x={27} $y={113.9} $s={32} $ls={0.04}>THANK YOU</CanvasText>
            <CanvasText $x={72.2} $y={174.4} $ls={0.18} $c="#5a2d9c">CONTACT US</CanvasText>
            <CanvasText $x={16.4} $y={213.3} $ls={0.09} $c="#dc1a1e">E-MAIL:saveetha@gmail.com</CanvasText>
            <CanvasText $x={79} $y={252.6} $ls={0.15} $c="#dc1a1e">PHONE</CanvasText>
            <CanvasText $x={58.5} $y={272.2} $ls={0.22}>5446555255</CanvasText>
            <CanvasText $x={58.5} $y={291.9} $ls={0.32}>5454516625</CanvasText>
          </Artboard>
          <Scrollbar />
        </Canvas>

        <RightPanel>
          <PanelTabs $pad={20}>
            <Label $ls={0.12}>Design</Label>
            <Label $ml={18.5} $w={500} $ls={0.08} $c="#b3b3b3">Prototype</Label>
          </PanelTabs>
          <PageSection>
            <PageTitle>Page</PageTitle>
            <FillRow>
              <Swatch />
              <Label $ml={9} $w={400} $ls={0.18}>F5F5F5</Label>
              <Label $ml={41} $w={400} $ls={-0.3}>100%</Label>
              <Push><Eye /></Push>
            </FillRow>
          </PageSection>
          <Section $end={22}><Label $w={500} $ls={0.08} $c="#b3b3b3">Local variables</Label><Push><Sliders /></Push></Section>
          <Section><Label $w={500} $ls={0.08} $c="#b3b3b3">Local styles</Label><Push><Plus c="#b3b3b3" /></Push></Section>
          <Section><Label $w={500} $ls={0.2} $c="#b3b3b3">Export</Label><Push><Plus c="#b3b3b3" /></Push></Section>
          <Help><QuestionMark /></Help>
        </RightPanel>
      </Workspace>

      <Taskbar>
        <Widget>
          <EarningsIcon />
          <WidgetText><div>Upcoming</div><div>Earnings</div></WidgetText>
        </Widget>
        <StartIcon />
        <SearchBox>
          <SearchGlyph s={19} sw={1.4} />
          <SearchWord>Search</SearchWord>
          <DeskArt />
        </SearchBox>
        <App55><StoreIcon /></App55>
        <App55><FolderIcon /></App55>
        <App55><EdgeIcon /></App55>
        <App55><ChromeIcon /></App55>
        <App55><FaWhatsapp size={33} color="#25d366" /><CountBadge>2</CountBadge></App55>
        <App55><YouTube w={30} h={21} /></App55>
        <App55 $mark="idle"><FaSpotify size={29} color="#1ed760" /></App55>
        <App55 $mark="active"><ActiveTile><ChromeIcon /></ActiveTile></App55>
        <App55 $mark="idle"><CodeEditorIcon /></App55>
        <Tray>
          <TrayIcon $w={30}><Chevron w={15} sw={1.3} up /></TrayIcon>
          <TrayText $w={67} $align="center" $ls={-0.16}><div>ENG</div><div>IN</div></TrayText>
          <TrayIcon $w={28}><Wifi /></TrayIcon>
          <TrayIcon $w={31}><Speaker /></TrayIcon>
          <TrayIcon $w={30}><Battery /></TrayIcon>
          <TrayText $w={92} $align="right" $ls={-0.2}><div>12:37</div><div>27-04-2024</div></TrayText>
          <TrayIcon $w={41}><BellSnooze /></TrayIcon>
          <TrayIcon $w={46}><Copilot /></TrayIcon>
        </Tray>
      </Taskbar>
    </Screen>
  );
}
